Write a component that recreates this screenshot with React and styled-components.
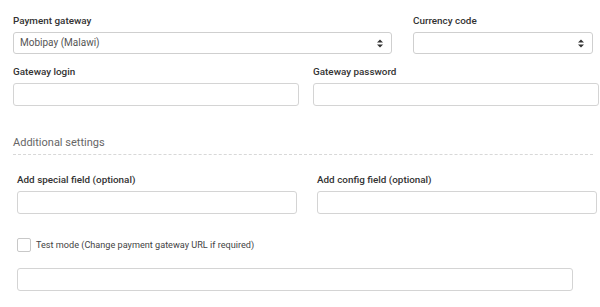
import React from "react";
import styled, { createGlobalStyle } from "styled-components";

const Global = createGlobalStyle`
  html, body { margin: 0; padding: 0; background: #fff; }
  body { font-family: Roboto, "Liberation Sans", Arial, sans-serif; color: #333; }
  * { box-sizing: border-box; }
`;

const Page = styled.div`
  width: 600px;
  height: 307px;
  padding: 14px 0 0 13px;
  display: flex;
  flex-direction: column;
`;

const Row = styled.div`
  display: grid;
  grid-template-columns: ${(p) => p.$cols};
  column-gap: ${(p) => p.$gap}px;
  margin-top: ${(p) => p.$top || 0}px;
  padding-left: ${(p) => p.$indent || 0}px;
`;

const Field = styled.div`
  display: flex;
  flex-direction: column;
`;

const Label = styled.label`
  font-size: 9.9px;
  line-height: 14px;
  font-weight: 500;
  color: #333;
  margin-bottom: 4px;
`;

const SelectBox = styled.div`
  position: relative;
  height: 22px;
  border: 1px solid #cfcfcf;
  border-radius: 3px;
  background: #fff;
  font-size: 10px;
  line-height: 20px;
  color: #555;
  padding-left: 6px;
`;

const Arrows = styled.svg`
  position: absolute;
  right: 8px;
  top: 6px;
`;

const Input = styled.input`
  height: 23px;
  width: 100%;
  border: 1px solid #d4d4d4;
  border-radius: 3px;
  background: #fff;
  outline: none;
  font-family: inherit;
`;

const Heading = styled.div`
  margin-top: 29px;
  font-size: 11px;
  line-height: 16px;
  color: #666;
  width: 580px;
  padding-bottom: 3px;
  border-bottom: 1px dashed #d8d8d8;
`;

const CheckRow = styled.label`
  display: flex;
  align-items: center;
  gap: 5px;
  margin-top: 24px;
  padding-left: 4px;
  font-size: 9.15px;
  color: #444;
`;

const Box = styled.span`
  width: 14px;
  height: 14px;
  border: 1px solid #c8c8c8;
  border-radius: 2px;
  background: #fff;
`;

const Wide = styled.div`
  margin-top: 16px;
  padding-left: 4px;
  width: 560px;
`;

const Select = ({ value }) => (
  <SelectBox>
    {value}
    <Arrows width="6" height="9" viewBox="0 0 6 9">
      <path d="M0 3.5 L3 0.5 L6 3.5 Z M0 5.5 L3 8.5 L6 5.5 Z" fill="#333" />
    </Arrows>
  </SelectBox>
);

export default function App() {
  return (
    <>
      <Global />
      <Page>
        <Row $cols="379px 180px" $gap={21}>
          <Field>
            <Label>Payment gateway</Label>
            <Select value="Mobipay (Malawi)" />
          </Field>
          <Field>
            <Label>Currency code</Label>
            <Select value="" />
          </Field>
        </Row>
        <Row $cols="286px 286px" $gap={14} $top={11}>
          <Field>
            <Label>Gateway login</Label>
            <Input />
          </Field>
          <Field>
            <Label>Gateway password</Label>
            <Input type="password" />
          </Field>
        </Row>
        <Heading>Additional settings</Heading>
        <Row $cols="280px 280px" $gap={20} $top={18} $indent={4}>
          <Field>
            <Label>Add special field (optional)</Label>
            <Input />
          </Field>
          <Field>
            <Label>Add config field (optional)</Label>
            <Input />
          </Field>
        </Row>
        <CheckRow>
          <Box />
          Test mode (Change payment gateway URL if required)
        </CheckRow>
        <Wide>
          <Input />
        </Wide>
      </Page>
    </>
  );
}
